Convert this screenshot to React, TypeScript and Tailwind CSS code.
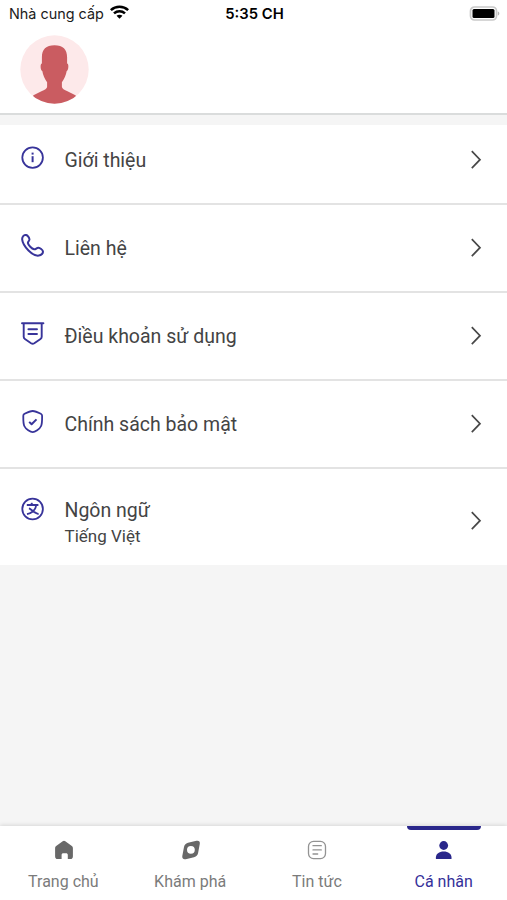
import React from "react";

interface MenuItem {
  label: string;
  icon: React.ReactNode;
  rowClass: string;
}

interface TabItem {
  label: string;
  icon: React.ReactNode;
  active?: boolean;
}

const InfoIcon = () => (
  <svg className="size-6" viewBox="0 0 24 24" fill="none" stroke="#38349a" strokeWidth="1.8">
    <circle cx="11.6" cy="11.6" r="10.3" />
    <path d="M11.6 10.2v6" strokeWidth="2" />
    <path d="M11.6 6.6v2" strokeWidth="2" />
  </svg>
);

const PhoneIcon = () => (
  <svg className="size-6" viewBox="0 0 24 24" fill="none" stroke="#38349a" strokeWidth="2" strokeLinejoin="round">
    <path d="M1.9 2.5C2.9.8 5.300.5 6.500 1.700c1.100 1.100 1.900 2.300 2 3.600.1 1.400-1.800 2.200-1.600 3.700.3 2 3.900 5.800 6.200 6.300 1.700.3 2.600-1.700 4.300-1.500 1.600.2 4.200 2 4.500 3.500.4 1.900-1.500 4-4.100 4.300-2.900.4-7.400-2.200-10.300-5.100C4.400 13.300 1.500 8.600 1.200 5.600c-.1-1.100.1-2.200.7-3.100z" />
  </svg>
);

const TermsIcon = () => (
  <svg className="size-6" viewBox="0 0 24 24" fill="none" stroke="#38349a" strokeWidth="1.9" strokeLinejoin="round">
    <path d="M1 1.300h21.400" strokeLinecap="round" />
    <path d="M2.700 1.300v13.500c0 1 .4 1.700 1.200 2.200l6.200 4.200c1 .6 2.200.6 3.200 0l6.200-4.200c.8-.5 1.200-1.200 1.200-2.200V1.300" />
    <path d="M7.400 7.300h8.600M7.400 12h8.600" strokeLinecap="round" />
  </svg>
);

const ShieldIcon = () => (
  <svg className="size-6" viewBox="0 0 24 24" fill="none" stroke="#38349a" strokeWidth="1.8" strokeLinejoin="round">
    <path d="M11.700 1c-1 0-6 1.700-8.100 2.800-.8.4-1.300 1-1.300 1.900 0 3.400-.2 7.500 1 10.300 1.300 3 6.300 6.200 8.400 6.200s7.100-3.200 8.400-6.200c1.200-2.800 1-6.900 1-10.300 0-.9-.5-1.500-1.300-1.900C17.700 2.700 12.700 1 11.700 1z" />
    <path d="M8.200 11.900l2.400 2.400 4.900-4.900" strokeWidth="2" />
  </svg>
);

const LanguageIcon = () => (
  <svg className="size-6" viewBox="0 0 24 24" fill="none" stroke="#38349a" strokeWidth="1.8">
    <circle cx="11.6" cy="12" r="10.3" />
    <path d="M5.800 8h11.600M10.300 5.900L11.600 8M15.200 8c-.5 4.200-4.100 7.900-9.200 9.200M7.900 11.300c1.800.3 5.900 5.500 9.700 5.700" />
  </svg>
);

const Chevron = () => (
  <svg className="ml-auto h-5 w-3" viewBox="0 0 12 20" fill="none" stroke="#484848" strokeWidth="1.7">
    <path d="M1.800 1.200L10 9.700l-8.200 8.500" />
  </svg>
);

const HomeIcon = () => (
  <svg className="size-5" viewBox="0 0 20 20" fill="#686868">
    <path d="M8.700 1.200a2 2 0 0 1 2.600 0l6.200 4.500c.9.600 1.400 1.400 1.400 2.500v8c0 1.900-.8 2.800-2.500 2.800h-2.600v-3.900c0-1.300-.7-1.900-1.900-1.900H9.500c-1.200 0-1.900.6-1.900 1.900V19H3.600c-1.700 0-2.500-.9-2.500-2.800v-8c0-1.100.5-1.900 1.400-2.500z" />
  </svg>
);

const ExploreIcon = () => (
  <svg className="size-5" viewBox="0 0 20 20" fill="#686868" fillRule="evenodd">
    <path d="M7 2.700l8.500-1.900c2.300-.5 3.700.8 3.300 3l-1.600 8.600c-.4 2.600-1.600 4-4.200 4.800l-8.300 2c-2.400.5-3.800-.8-3.400-3.100L2.900 7.500C3.300 4.900 4.500 3.400 7 2.700zM9.900 5.900a3.900 3.900 0 1 0 0 7.800 3.900 3.900 0 0 0 0-7.800z" />
  </svg>
);

const NewsIcon = () => (
  <svg className="size-5" viewBox="0 0 20 20" fill="none" stroke="#939393" strokeWidth="1.3" strokeLinecap="round">
    <rect x="1.500" y="1.400" width="17" height="17.200" rx="5" />
    <path d="M6 5.700h8.300M6 9.900h8.300M6 14h4.700" />
  </svg>
);

const UserIcon = () => (
  <svg className="size-5" viewBox="0 0 20 20" fill="#2a278b">
    <circle cx="9.700" cy="5.500" r="4.400" />
    <path d="M1.900 19v-1.500c0-3.500 3.200-5.900 7.800-5.900s7.800 2.400 7.800 5.900V19z" />
  </svg>
);

const menu: MenuItem[] = [
  { label: "Giới thiệu", icon: <InfoIcon />, rowClass: "h-20 pb-[8px]" },
  { label: "Liên hệ", icon: <PhoneIcon />, rowClass: "h-[88px]" },
  { label: "Điều khoản sử dụng", icon: <TermsIcon />, rowClass: "h-[88px]" },
  { label: "Chính sách bảo mật", icon: <ShieldIcon />, rowClass: "h-[88px]" },
];

const tabs: TabItem[] = [
  { label: "Trang chủ", icon: <HomeIcon /> },
  { label: "Khám phá", icon: <ExploreIcon /> },
  { label: "Tin tức", icon: <NewsIcon /> },
  { label: "Cá nhân", icon: <UserIcon />, active: true },
];

const StatusBar = () => (
  <div className="grid h-7 grid-cols-3 items-center pl-[9px] pr-[7px] font-[Inter,sans-serif] text-[14.4px] text-[#1c1c1c]">
    <div className="-mt-px flex items-center gap-[6px] whitespace-nowrap">
      <span>Nhà cung cấp</span>
      <svg className="-mt-0.5 h-[14px] w-[19px]" viewBox="0 0 18 14" preserveAspectRatio="none" fill="none" stroke="#000" strokeWidth="2.4">
        <path d="M.8 5.100c4.600-4.400 11.800-4.400 16.400 0M3.800 8.400c3-2.800 7.400-2.800 10.400 0" />
        <path d="M9 13.700l-2.800-2.900c1.600-1.400 4-1.400 5.600 0z" fill="#000" stroke="none" />
      </svg>
    </div>
    <span className="text-center text-[14.8px] font-semibold text-black">5:35 CH</span>
    <svg className="-mt-0.5 h-[15px] w-[31px] justify-self-end" viewBox="0 0 31 15">
      <rect x="1.500" y="1" width="26" height="13" rx="4" fill="#fff" stroke="#c9c9c9" strokeWidth="1.7" />
      <rect x="3.500" y="3" width="22" height="9" rx="1.500" fill="#000" />
      <path d="M28.800 5.500c2 .6 2 3.400 0 4z" fill="#b5b5b5" />
    </svg>
  </div>
);

const Avatar = () => (
  <svg className="ml-5 mt-[7px] size-[69px]" viewBox="0 0 69 69">
    <defs>
      <clipPath id="avatar">
        <circle cx="34.500" cy="34.500" r="34.200" />
      </clipPath>
    </defs>
    <g clipPath="url(#avatar)">
      <rect width="69" height="69" fill="#fde9ea" />
      <path
        d="M34.500 10.200c8.500 0 12.600 4 12.600 12v6.300c1.800 0 1.700 6.400-.4 7.600-.6 4.200-2.600 8-4.800 11.100v4.600c0 3.700 9.900 5.300 15.300 9.900V69H11.800v-7.300c5.400-4.600 15.300-6.200 15.300-9.900v-4.600c-2.200-3.100-4.200-6.900-4.800-11.100-2.100-1.200-2.200-7.600-.4-7.600v-6.300c0-8 4.100-12 12.600-12z"
        fill="#ca5c61"
      />
    </g>
  </svg>
);

const App: React.FC = () => {
  return (
    <div className="flex h-[900px] w-[507px] flex-col overflow-hidden bg-[#f5f5f5] font-[Roboto,sans-serif] text-[#444]">
      <header className="h-[115px] shrink-0 border-b-2 border-[#dadcdc] bg-white">
        <StatusBar />
        <Avatar />
      </header>

      <main className="mt-[10px] flex-1">
        {menu.map((item) => (
          <div
            key={item.label}
            className={`flex items-center border-b-2 border-[#e3e3e3] bg-white pl-[21px] pr-[25px] ${item.rowClass}`}
          >
            <div className="mb-[5px]">{item.icon}</div>
            <span className="ml-[19.5px] pt-[2px] text-[19.5px]">{item.label}</span>
            <Chevron />
          </div>
        ))}
        <div className="flex h-24 items-center bg-white pl-[21px] pr-[25px] pt-[8px]">
          <div className="mb-6">
            <LanguageIcon />
          </div>
          <div className="ml-[19.5px] flex flex-col pt-[3px]">
            <span className="text-[19.5px] leading-[26px]">Ngôn ngữ</span>
            <span className="text-[17px] leading-6">Tiếng Việt</span>
          </div>
          <Chevron />
        </div>
      </main>

      <nav className="grid h-[74px] shrink-0 grid-cols-4 bg-white shadow-[0_-1px_4px_rgba(0,0,0,0.12)]">
        {tabs.map((tab) => (
          <div
            key={tab.label}
            className={`flex flex-col items-center text-[16px] ${tab.active ? "text-[#35309a]" : "text-[#7b7b7b]"}`}
          >
            <div className={`h-1 w-[74px] rounded-b-[4px] ${tab.active ? "bg-[#2a278b]" : ""}`} />
            <div className="ml-px mt-[10px]">{tab.icon}</div>
            <span className="mt-[10px]">{tab.label}</span>
          </div>
        ))}
      </nav>
    </div>
  );
};

export default App;
